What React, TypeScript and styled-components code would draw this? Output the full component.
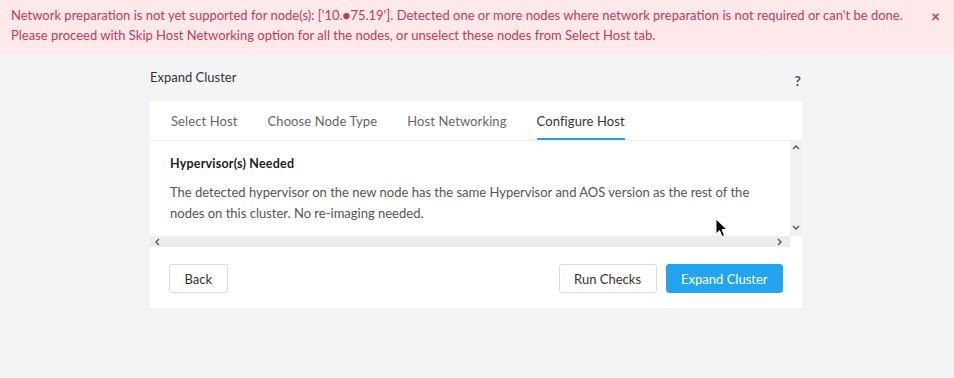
import styled, { createGlobalStyle } from "styled-components";

const GlobalStyle = createGlobalStyle`
  body {
    margin: 0;
    background: #f4f4f7;
    font-family: Lato, "Open Sans", sans-serif;
    color: #333;
  }
`;

const Page = styled.div`
  position: relative;
  width: 954px;
  height: 378px;
  overflow: hidden;
`;

const Banner = styled.div`
  display: flex;
  justify-content: space-between;
  align-items: flex-start;
  height: 55px;
  box-sizing: border-box;
  padding: 5px 14px 0 11px;
  background: linear-gradient(#fde9ea 85%, #f8eef2);
  color: #bd3b5a;
  font-size: 13px;
  line-height: 20px;
`;

const Close = styled.span`
  font-size: 15px;
  font-weight: 700;
  line-height: 14px;
  margin-top: 4px;
`;

const Wrapper = styled.div`
  width: 652px;
  margin-left: 150px;
  padding-top: 14px;
`;

const TitleRow = styled.div`
  display: flex;
  justify-content: space-between;
  align-items: flex-start;
  height: 32px;
  font-size: 13px;
  color: #333;
`;

const Help = styled.span`
  font-weight: 700;
  color: #555;
  font-size: 14px;
  margin: 3px 0 0;
  padding-right: 1px;
`;

const Card = styled.div`
  background: #fff;
`;

const Tabs = styled.div`
  display: flex;
  gap: 30px;
  padding: 0 21px;
  height: 39px;
  border-bottom: 1px solid #f0f0f2;
`;

const Tab = styled.div<{ $active?: boolean }>`
  display: flex;
  align-items: center;
  font-size: 13px;
  letter-spacing: 0.1px;
  color: ${(p) => (p.$active ? "#333" : "#666")};
  border-bottom: 2px solid ${(p) => (p.$active ? "#2b9fe0" : "transparent")};
  box-sizing: border-box;
  padding-top: 2px;
`;

const ScrollArea = styled.div`
  display: grid;
  grid-template-columns: 1fr 12px;
  grid-template-rows: 95px 11px;
`;

const Content = styled.div`
  padding: 15px 20px 0;
`;

const Heading = styled.div`
  font-size: 12.5px;
  font-weight: 700;
  letter-spacing: 0.2px;
  color: #222;
  margin-bottom: 11px;
`;

const Text = styled.p`
  margin: 0;
  font-size: 13px;
  line-height: 21px;
  color: #555;
`;

const VBar = styled.div`
  display: flex;
  flex-direction: column;
  justify-content: space-between;
  align-items: center;
  background: #f1f1f1;
  padding: 3px 0 4px;
`;

const HBar = styled.div`
  display: flex;
  justify-content: space-between;
  align-items: center;
  background: #ededed;
  padding: 0 6px 0 4px;
`;

const Corner = styled.div`
  background: #fff;
`;

const Footer = styled.div`
  display: flex;
  justify-content: space-between;
  align-items: center;
  padding: 17px 19px 15px;
`;

const Actions = styled.div`
  display: flex;
  gap: 9px;
`;

const Button = styled.button<{ $primary?: boolean }>`
  height: 29px;
  padding: 0 14.5px;
  font-family: inherit;
  font-size: 13px;
  border-radius: 3px;
  border: 1px solid ${(p) => (p.$primary ? "#22a4f0" : "#dcdcdf")};
  background: ${(p) => (p.$primary ? "#22a4f0" : "#fff")};
  color: ${(p) => (p.$primary ? "#fff" : "#333")};
`;

const Cursor = styled.svg`
  position: absolute;
  left: 715px;
  top: 218px;
`;

const Chevron = ({ dir }: { dir: "up" | "down" | "left" | "right" }) => {
  const paths = {
    up: "M1 5 L4 2 L7 5",
    down: "M1 2 L4 5 L7 2",
    left: "M5 1 L2 4 L5 7",
    right: "M2 1 L5 4 L2 7",
  };
  return (
    <svg width="8" height="8" viewBox="0 0 8 8">
      <path d={paths[dir]} fill="none" stroke="#555" strokeWidth="1.4" />
    </svg>
  );
};

export default function App() {
  return (
    <Page>
      <GlobalStyle />
      <Banner>
        <div>
          Network preparation is not yet supported for node(s): ['10.●75.19']. Detected one or more nodes where network
          preparation is not required or can't be done.
          <br />
          Please proceed with Skip Host Networking option for all the nodes, or unselect these nodes from Select Host tab.
        </div>
        <Close>×</Close>
      </Banner>
      <Wrapper>
        <TitleRow>
          <span>Expand Cluster</span>
          <Help>?</Help>
        </TitleRow>
        <Card>
          <Tabs>
            <Tab>Select Host</Tab>
            <Tab>Choose Node Type</Tab>
            <Tab>Host Networking</Tab>
            <Tab $active>Configure Host</Tab>
          </Tabs>
          <ScrollArea>
            <Content>
              <Heading>Hypervisor(s) Needed</Heading>
              <Text>
                The detected hypervisor on the new node has the same Hypervisor and AOS version as the rest of the
                nodes on this cluster. No re-imaging needed.
              </Text>
            </Content>
            <VBar>
              <Chevron dir="up" />
              <Chevron dir="down" />
            </VBar>
            <HBar>
              <Chevron dir="left" />
              <Chevron dir="right" />
            </HBar>
            <Corner />
          </ScrollArea>
          <Footer>
            <Button>Back</Button>
            <Actions>
              <Button>Run Checks</Button>
              <Button $primary>Expand Cluster</Button>
            </Actions>
          </Footer>
        </Card>
      </Wrapper>
      <Cursor width="14" height="20" viewBox="0 0 14 20">
        <path d="M1 1 L1 16 L4.5 12.5 L7 18.5 L9.5 17.5 L7 11.5 L12 11.5 Z" fill="#000" stroke="#fff" strokeWidth="1" />
      </Cursor>
    </Page>
  );
}
